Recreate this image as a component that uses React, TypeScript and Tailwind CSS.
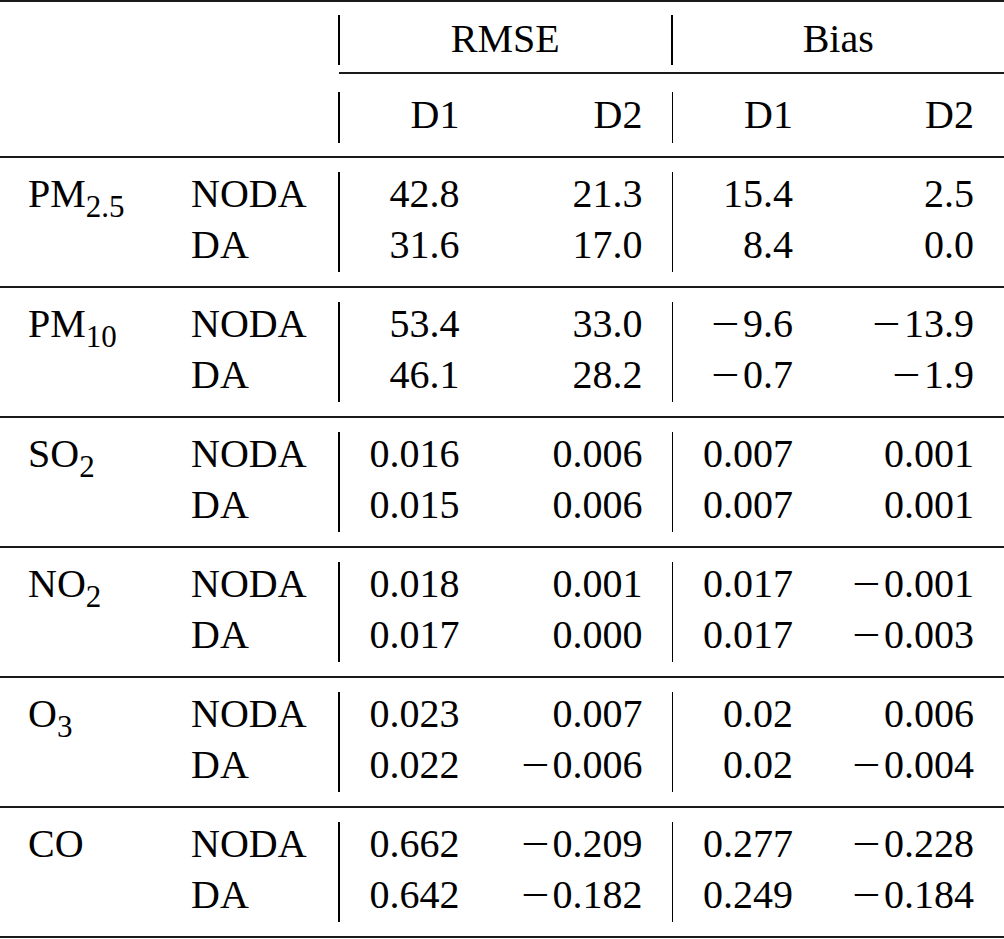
import React from 'react';

type Row = { method: string; v: [string, string, string, string] };
type Group = { name: string; sub?: string; rows: Row[] };

const groups: Group[] = [
  {
    name: 'PM',
    sub: '2.5',
    rows: [
      { method: 'NODA', v: ['42.8', '21.3', '15.4', '2.5'] },
      { method: 'DA', v: ['31.6', '17.0', '8.4', '0.0'] },
    ],
  },
  {
    name: 'PM',
    sub: '10',
    rows: [
      { method: 'NODA', v: ['53.4', '33.0', '−9.6', '−13.9'] },
      { method: 'DA', v: ['46.1', '28.2', '−0.7', '−1.9'] },
    ],
  },
  {
    name: 'SO',
    sub: '2',
    rows: [
      { method: 'NODA', v: ['0.016', '0.006', '0.007', '0.001'] },
      { method: 'DA', v: ['0.015', '0.006', '0.007', '0.001'] },
    ],
  },
  {
    name: 'NO',
    sub: '2',
    rows: [
      { method: 'NODA', v: ['0.018', '0.001', '0.017', '−0.001'] },
      { method: 'DA', v: ['0.017', '0.000', '0.017', '−0.003'] },
    ],
  },
  {
    name: 'O',
    sub: '3',
    rows: [
      { method: 'NODA', v: ['0.023', '0.007', '0.02', '0.006'] },
      { method: 'DA', v: ['0.022', '−0.006', '0.02', '−0.004'] },
    ],
  },
  {
    name: 'CO',
    rows: [
      { method: 'NODA', v: ['0.662', '−0.209', '0.277', '−0.228'] },
      { method: 'DA', v: ['0.642', '−0.182', '0.249', '−0.184'] },
    ],
  },
];

// minus sign a bit wider, as TeX sets it
function Num({ value }: { value: string }) {
  if (value.startsWith('−')) {
    return (
      <span>
        <span className="inline-block scale-x-[1.25] mr-[6px]">−</span>
        {value.slice(1)}
      </span>
    );
  }
  return <span>{value}</span>;
}

function Sep({ className }: { className: string }) {
  return <div className={`w-[1.5px] bg-black shrink-0 ${className}`} />;
}

function Rule() {
  return <div className="h-[2px] bg-[#1a1a1a]" />;
}

function GroupBlock({ g }: { g: Group }) {
  return (
    <div className="flex h-[128px]">
      <div className="w-[191px] pl-[28px] pt-[10px]">
        {g.name}
        {g.sub && <span className="relative top-[10px] text-[31px] leading-none">{g.sub}</span>}
      </div>
      <div className="w-[147px] pt-[10px]">
        {g.rows.map(r => (
          <div key={r.method}>{r.method}</div>
        ))}
      </div>
      <Sep className="my-[14px]" />
      <div className="w-[120px] pt-[10px] text-right">
        {g.rows.map(r => (
          <div key={r.method}><Num value={r.v[0]} /></div>
        ))}
      </div>
      <div className="w-[183px] pt-[10px] text-right">
        {g.rows.map(r => (
          <div key={r.method}><Num value={r.v[1]} /></div>
        ))}
      </div>
      <div className="w-[29px]" />
      <Sep className="my-[14px]" />
      <div className="w-[120px] pt-[10px] text-right">
        {g.rows.map(r => (
          <div key={r.method}><Num value={r.v[2]} /></div>
        ))}
      </div>
      <div className="w-[181px] pt-[10px] text-right">
        {g.rows.map(r => (
          <div key={r.method}><Num value={r.v[3]} /></div>
        ))}
      </div>
    </div>
  );
}

export default function App() {
  return (
    <div className="w-[1004px] h-[939px] bg-white text-black text-[40px] leading-[51px] overflow-hidden font-['Liberation_Serif','Times_New_Roman',serif]">
      <Rule />
      {/* header: metric names */}
      <div className="flex h-[70px]">
        <div className="w-[338px]" />
        <Sep className="mt-[13px] mb-[7px]" />
        <div className="flex-1 pt-[11px] text-center">RMSE</div>
        <Sep className="mt-[13px] mb-[7px]" />
        <div className="flex-1 pt-[11px] text-center">Bias</div>
      </div>
      <div className="ml-[339px] h-[2px] bg-[#1a1a1a]" />
      {/* header: domains */}
      <div className="flex h-[82px]">
        <div className="w-[338px]" />
        <Sep className="mt-[18px] mb-[13px]" />
        <div className="w-[120px] pt-[15px] text-right">D1</div>
        <div className="w-[183px] pt-[15px] text-right">D2</div>
        <div className="w-[29px]" />
        <Sep className="mt-[18px] mb-[13px]" />
        <div className="w-[120px] pt-[15px] text-right">D1</div>
        <div className="w-[181px] pt-[15px] text-right">D2</div>
      </div>
      {groups.map((g, i) => (
        <div key={i}>
          <Rule />
          <GroupBlock g={g} />
        </div>
      ))}
      <Rule />
    </div>
  );
}
